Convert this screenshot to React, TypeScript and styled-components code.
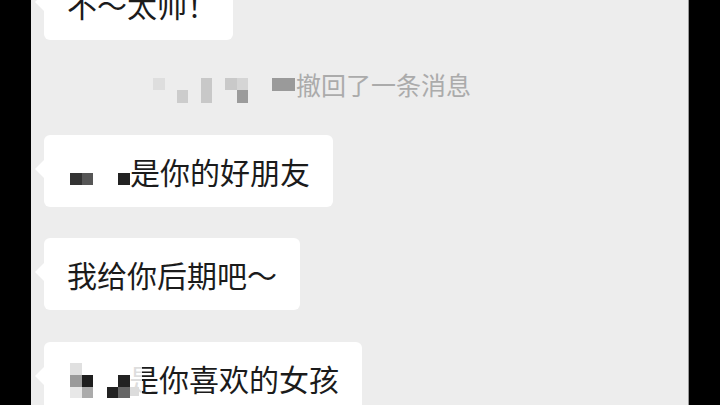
import React from "react";
import styled, { createGlobalStyle } from "styled-components";

const GlobalStyle = createGlobalStyle`
  html, body {
    margin: 0;
    padding: 0;
    background: #000;
    overflow: hidden;
  }
  body {
    font-family: "Noto Sans CJK SC", "Noto Sans", sans-serif;
  }
`;

const Screen = styled.div`
  width: 720px;
  height: 405px;
  display: flex;
  justify-content: center;
  background: #000;
  overflow: hidden;
`;

const ChatPanel = styled.div`
  width: 658px;
  height: 405px;
  background: #ededed;
  overflow: hidden;
  border-right: 1px solid #9a9a9a;
  box-sizing: border-box;
`;

const MessageList = styled.div`
  display: flex;
  flex-direction: column;
  align-items: flex-start;
  margin-top: -32px;
  padding-left: 13px;
`;

const Bubble = styled.div<{ $gap: number; $padRight?: number }>`
  position: relative;
  margin-top: ${(p) => p.$gap}px;
  background: #fff;
  border-radius: 6px;
  padding: 15px ${(p) => p.$padRight ?? 23}px 15px 23px;
  font-size: 30px;
  line-height: 42px;
  color: #1b1b1b;
  white-space: nowrap;

  &::before {
    content: "";
    position: absolute;
    left: -9px;
    top: 25px;
    border-top: 9px solid transparent;
    border-bottom: 9px solid transparent;
    border-right: 9px solid #fff;
  }
`;

// the blurred name sits in the text line and may spill over the next glyph
const Mosaic = styled.svg`
  display: inline-block;
  vertical-align: top;
  overflow: visible;
  position: relative;
  z-index: 1;
`;

const RecallRow = styled.div`
  display: flex;
  align-items: flex-start;
  margin-top: 30px;
  margin-left: 109px;
  height: 34px;
`;

const RecallMosaic = styled.svg`
  margin-top: 8px;
  flex-shrink: 0;
`;

const RecallText = styled.span`
  font-size: 25px;
  line-height: 28px;
  color: #ababab;
  white-space: nowrap;
`;

type Block = [number, number, number, number, string];

const recallBlocks: Block[] = [
  [0, 0, 12, 12, "#dedede"],
  [24, 12, 11, 13, "#cccccc"],
  [48, 0, 11, 25, "#c8c8c8"],
  [72, 0, 12, 12, "#c9c9c9"],
  [84, 0, 11, 12, "#d5d5d5"],
  [84, 12, 11, 13, "#9b9b9b"],
  [119, 0, 23, 13, "#9a9a9a"],
];

const friendBlocks: Block[] = [
  [3, 23, 12, 12, "#333333"],
  [15, 23, 11, 12, "#565656"],
  [51, 23, 12, 12, "#222222"],
];

const girlBlocks: Block[] = [
  [63, 6, 12, 35, "rgba(255,255,255,0.85)"],
  [3, 6, 12, 12, "#e0e0e0"],
  [3, 18, 12, 12, "#9a9a9a"],
  [15, 18, 11, 12, "#1e1e1e"],
  [3, 30, 12, 11, "#e8e8e8"],
  [15, 30, 11, 11, "#ababab"],
  [51, 18, 12, 12, "#222222"],
  [40, 30, 11, 11, "#222222"],
  [51, 30, 12, 11, "#666666"],
  [63, 30, 9, 9, "#dcdcdc"],
];

const Blocks = ({ blocks }: { blocks: Block[] }) => (
  <>
    {blocks.map(([x, y, w, h, c], i) => (
      <rect key={i} x={x} y={y} width={w} height={h} fill={c} />
    ))}
  </>
);

export default function App() {
  return (
    <>
      <GlobalStyle />
      <Screen>
        <ChatPanel>
          <MessageList>
            <Bubble $gap={0} $padRight={16}>
              不～太帅！
            </Bubble>

            <RecallRow>
              <RecallMosaic width={143} height={26}>
                <Blocks blocks={recallBlocks} />
              </RecallMosaic>
              <RecallText>撤回了一条消息</RecallText>
            </RecallRow>

            <Bubble $gap={31}>
              <Mosaic width={63} height={42}>
                <Blocks blocks={friendBlocks} />
              </Mosaic>
              是你的好朋友
            </Bubble>

            <Bubble $gap={31}>我给你后期吧～</Bubble>

            <Bubble $gap={32}>
              <Mosaic width={62} height={42}>
                <Blocks blocks={girlBlocks} />
              </Mosaic>
              是你喜欢的女孩
            </Bubble>
          </MessageList>
        </ChatPanel>
      </Screen>
    </>
  );
}
